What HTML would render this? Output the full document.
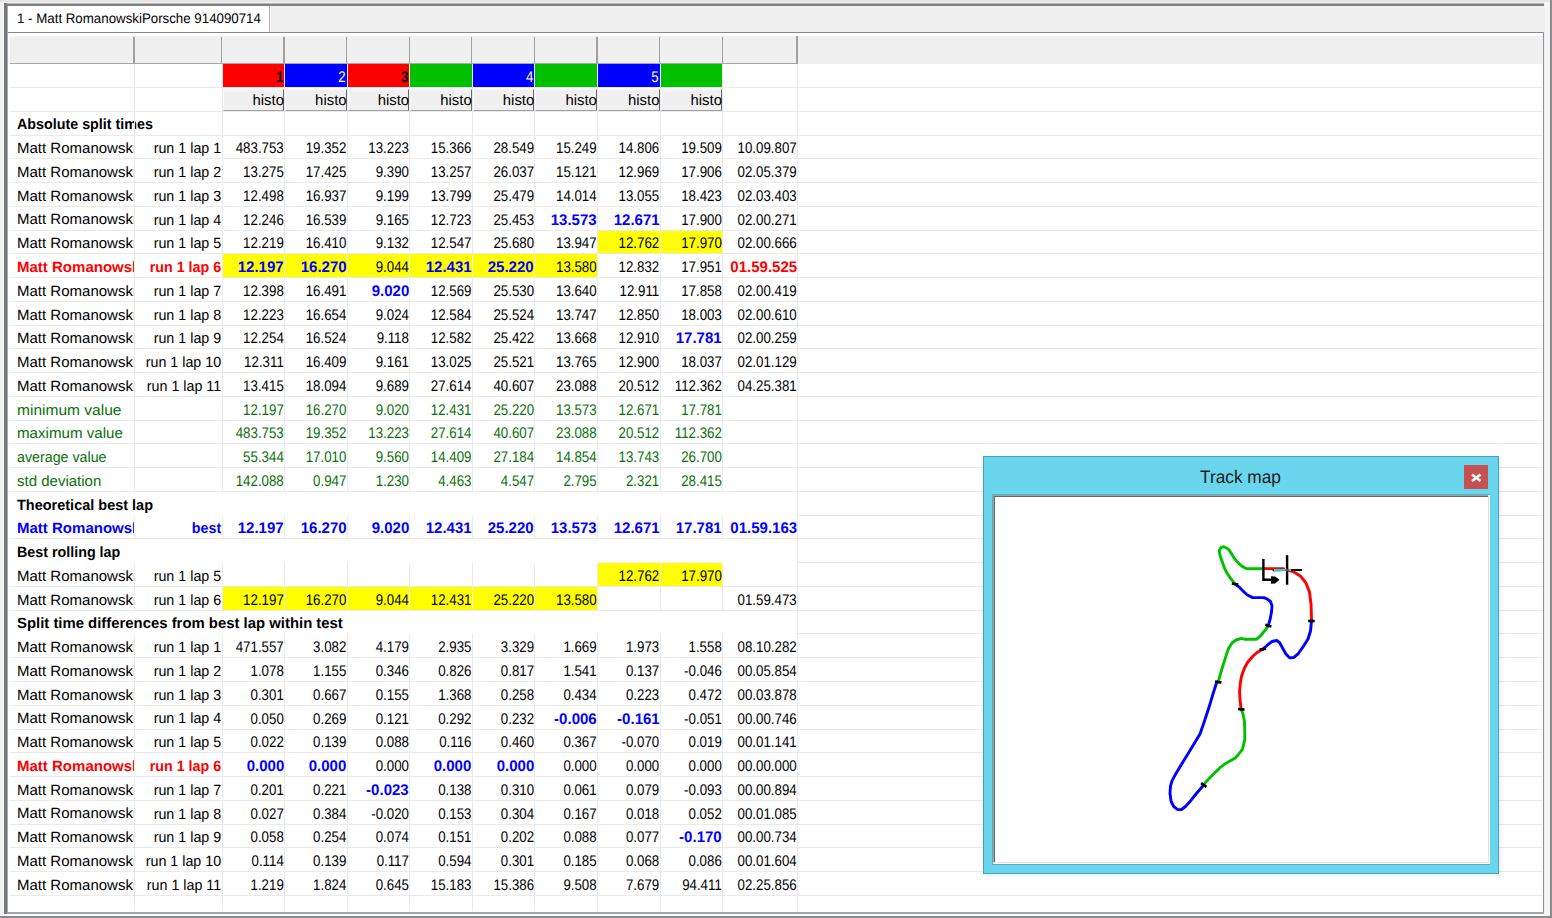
<!DOCTYPE html><html><head><meta charset="utf-8"><style>
*{margin:0;padding:0;box-sizing:border-box}
html,body{width:1552px;height:918px;overflow:hidden;background:#f0f0f0;font-family:"Liberation Sans",sans-serif;color:#000;text-rendering:geometricPrecision}
.a{position:absolute}
.t{position:absolute;white-space:pre;line-height:1}
.gl{position:absolute;background:#eaeaea}
</style></head><body>
<div class="a" style="left:0;top:0;width:1552px;height:2px;background:#e5e5e5"></div>
<div class="a" style="left:1px;top:2px;width:1548px;height:914px;border-left:3px solid #f5f5f5;border-top:1px solid #f4f4f4;border-right:4px solid #f7f7f7;border-bottom:2px solid #f7f7f7"></div>
<div class="a" style="left:1550px;top:0;width:2px;height:918px;background:#8c8c8c"></div>
<div class="a" style="left:0;top:916px;width:1552px;height:2px;background:#8a8a8a"></div>
<div class="a" style="left:4px;top:3px;width:1540px;height:1px;background:#b4b4b4"></div>
<div class="a" style="left:4px;top:4px;width:1540px;height:2px;background:#818181"></div>
<div class="a" style="left:4px;top:3px;width:3px;height:911px;background:#75787c"></div>
<div class="a" style="left:7px;top:6px;width:1px;height:908px;background:#a8abb0"></div>
<div class="a" style="left:8px;top:6px;width:1535px;height:906px;background:#fff"></div>
<div class="a" style="left:270px;top:5.8px;width:1274px;height:26px;background:#f0f0f0"></div>
<div class="a" style="left:269.2px;top:5.8px;width:1px;height:26px;background:#b8b8b8"></div>
<div class="a" style="left:7.7px;top:31.6px;width:1536.5px;height:1.2px;background:#848a94"></div>
<div class="a" style="left:1543px;top:32px;width:1px;height:882px;background:#8f949c"></div>
<div class="a" style="left:7px;top:912px;width:1537px;height:2px;background:#a0a4ab"></div>
<div class="t" style="left:17px;top:12.14px;font-size:13.3px;color:#000;transform:scale(1,1.05);transform-origin:left 11.26px;">1 - Matt RomanowskiPorsche 914090714</div>
<div class="a" style="left:10px;top:35.5px;width:1533.2px;height:28.14px;background:#f0f0f0"></div>
<div class="a" style="left:10px;top:62.9px;width:787.5px;height:1.2px;background:#a8a8a8"></div>
<div class="a" style="left:133.4px;top:37px;width:1.2px;height:26.6px;background:#a0a0a0"></div>
<div class="a" style="left:220.9px;top:37px;width:1.2px;height:26.6px;background:#a0a0a0"></div>
<div class="a" style="left:283.47px;top:37px;width:1.2px;height:26.6px;background:#a0a0a0"></div>
<div class="a" style="left:346.05px;top:37px;width:1.2px;height:26.6px;background:#a0a0a0"></div>
<div class="a" style="left:408.62px;top:37px;width:1.2px;height:26.6px;background:#a0a0a0"></div>
<div class="a" style="left:471.2px;top:37px;width:1.2px;height:26.6px;background:#a0a0a0"></div>
<div class="a" style="left:533.77px;top:37px;width:1.2px;height:26.6px;background:#a0a0a0"></div>
<div class="a" style="left:596.35px;top:37px;width:1.2px;height:26.6px;background:#a0a0a0"></div>
<div class="a" style="left:658.93px;top:37px;width:1.2px;height:26.6px;background:#a0a0a0"></div>
<div class="a" style="left:721.5px;top:37px;width:1.2px;height:26.6px;background:#a0a0a0"></div>
<div class="a" style="left:796.4px;top:35.5px;width:1.2px;height:28.1px;background:#a0a0a0"></div>
<div class="a" style="left:223px;top:64px;width:61px;height:23px;background:#ff0000"></div>
<div class="t" style="right:1268.92px;top:70.98px;font-size:13.3px;color:#000;font-weight:bold;transform:scale(0.95,1.16);transform-origin:right 11.26px;">1</div>
<div class="a" style="left:285px;top:64px;width:62px;height:23px;background:#0000ff"></div>
<div class="t" style="right:1206.35px;top:70.98px;font-size:13.3px;color:#fff;transform:scale(1,1.16);transform-origin:right 11.26px;">2</div>
<div class="a" style="left:348px;top:64px;width:61px;height:23px;background:#ff0000"></div>
<div class="t" style="right:1143.78px;top:70.98px;font-size:13.3px;color:#000;font-weight:bold;transform:scale(0.95,1.16);transform-origin:right 11.26px;">3</div>
<div class="a" style="left:410px;top:64px;width:62px;height:23px;background:#00c000"></div>
<div class="a" style="left:473px;top:64px;width:61px;height:23px;background:#0000ff"></div>
<div class="t" style="right:1018.62px;top:70.98px;font-size:13.3px;color:#fff;transform:scale(1,1.16);transform-origin:right 11.26px;">4</div>
<div class="a" style="left:535px;top:64px;width:62px;height:23px;background:#00c000"></div>
<div class="a" style="left:598px;top:64px;width:62px;height:23px;background:#0000ff"></div>
<div class="t" style="right:893.47px;top:70.98px;font-size:13.3px;color:#fff;transform:scale(1,1.16);transform-origin:right 11.26px;">5</div>
<div class="a" style="left:661px;top:64px;width:61px;height:23px;background:#00c000"></div>
<div class="a" style="left:223px;top:88.8px;width:61px;height:22.4px;background:#f0f0f0;border-top:1px solid #fafafa;border-left:1px solid #fafafa;border-right:1.3px solid #6a6a6a;border-bottom:1.2px solid #a0a0a0;overflow:hidden"></div>
<div class="t" style="right:1268.03px;top:94.29px;font-size:14.9px;color:#000;">histo</div>
<div class="a" style="left:285px;top:88.8px;width:62px;height:22.4px;background:#f0f0f0;border-top:1px solid #fafafa;border-left:1px solid #fafafa;border-right:1.3px solid #6a6a6a;border-bottom:1.2px solid #a0a0a0;overflow:hidden"></div>
<div class="t" style="right:1205.45px;top:94.29px;font-size:14.9px;color:#000;">histo</div>
<div class="a" style="left:348px;top:88.8px;width:61px;height:22.4px;background:#f0f0f0;border-top:1px solid #fafafa;border-left:1px solid #fafafa;border-right:1.3px solid #6a6a6a;border-bottom:1.2px solid #a0a0a0;overflow:hidden"></div>
<div class="t" style="right:1142.88px;top:94.29px;font-size:14.9px;color:#000;">histo</div>
<div class="a" style="left:410px;top:88.8px;width:62px;height:22.4px;background:#f0f0f0;border-top:1px solid #fafafa;border-left:1px solid #fafafa;border-right:1.3px solid #6a6a6a;border-bottom:1.2px solid #a0a0a0;overflow:hidden"></div>
<div class="t" style="right:1080.3px;top:94.29px;font-size:14.9px;color:#000;">histo</div>
<div class="a" style="left:473px;top:88.8px;width:61px;height:22.4px;background:#f0f0f0;border-top:1px solid #fafafa;border-left:1px solid #fafafa;border-right:1.3px solid #6a6a6a;border-bottom:1.2px solid #a0a0a0;overflow:hidden"></div>
<div class="t" style="right:1017.73px;top:94.29px;font-size:14.9px;color:#000;">histo</div>
<div class="a" style="left:535px;top:88.8px;width:62px;height:22.4px;background:#f0f0f0;border-top:1px solid #fafafa;border-left:1px solid #fafafa;border-right:1.3px solid #6a6a6a;border-bottom:1.2px solid #a0a0a0;overflow:hidden"></div>
<div class="t" style="right:955.15px;top:94.29px;font-size:14.9px;color:#000;">histo</div>
<div class="a" style="left:598px;top:88.8px;width:62px;height:22.4px;background:#f0f0f0;border-top:1px solid #fafafa;border-left:1px solid #fafafa;border-right:1.3px solid #6a6a6a;border-bottom:1.2px solid #a0a0a0;overflow:hidden"></div>
<div class="t" style="right:892.57px;top:94.29px;font-size:14.9px;color:#000;">histo</div>
<div class="a" style="left:661px;top:88.8px;width:61px;height:22.4px;background:#f0f0f0;border-top:1px solid #fafafa;border-left:1px solid #fafafa;border-right:1.3px solid #6a6a6a;border-bottom:1.2px solid #a0a0a0;overflow:hidden"></div>
<div class="t" style="right:830px;top:94.29px;font-size:14.9px;color:#000;">histo</div>
<div class="t" style="left:17px;top:118.46px;font-size:14.3px;color:#000;font-weight:bold;transform:scale(1,1.04);transform-origin:left 12.1px;">Absolute split times</div>
<div class="a" style="left:10px;top:134.92px;width:123.9px;height:23.76px;overflow:hidden">
<div class="t" style="left:7px;top:7.3px;font-size:14.3px;color:#000;transform:scale(1.05,1.04);transform-origin:left 12.1px;">Matt Romanowski</div>
</div>
<div class="t" style="right:1330.8px;top:142.22px;font-size:14.3px;color:#000;transform:scale(1,1.04);transform-origin:right 12.1px;">run 1 lap 1</div>
<div class="t" style="right:1268.22px;top:142.26px;font-size:13.3px;color:#000;transform:scale(1,1.16);transform-origin:right 11.26px;">483.753</div>
<div class="t" style="right:1205.65px;top:142.26px;font-size:13.3px;color:#000;transform:scale(1,1.16);transform-origin:right 11.26px;">19.352</div>
<div class="t" style="right:1143.08px;top:142.26px;font-size:13.3px;color:#000;transform:scale(1,1.16);transform-origin:right 11.26px;">13.223</div>
<div class="t" style="right:1080.5px;top:142.26px;font-size:13.3px;color:#000;transform:scale(1,1.16);transform-origin:right 11.26px;">15.366</div>
<div class="t" style="right:1017.92px;top:142.26px;font-size:13.3px;color:#000;transform:scale(1,1.16);transform-origin:right 11.26px;">28.549</div>
<div class="t" style="right:955.35px;top:142.26px;font-size:13.3px;color:#000;transform:scale(1,1.16);transform-origin:right 11.26px;">15.249</div>
<div class="t" style="right:892.77px;top:142.26px;font-size:13.3px;color:#000;transform:scale(1,1.16);transform-origin:right 11.26px;">14.806</div>
<div class="t" style="right:830.2px;top:142.26px;font-size:13.3px;color:#000;transform:scale(1,1.16);transform-origin:right 11.26px;">19.509</div>
<div class="t" style="right:755.3px;top:142.26px;font-size:13.3px;color:#000;transform:scale(1,1.16);transform-origin:right 11.26px;">10.09.807</div>
<div class="a" style="left:10px;top:158.68px;width:123.9px;height:23.76px;overflow:hidden">
<div class="t" style="left:7px;top:7.3px;font-size:14.3px;color:#000;transform:scale(1.05,1.04);transform-origin:left 12.1px;">Matt Romanowski</div>
</div>
<div class="t" style="right:1330.8px;top:165.98px;font-size:14.3px;color:#000;transform:scale(1,1.04);transform-origin:right 12.1px;">run 1 lap 2</div>
<div class="t" style="right:1268.22px;top:166.02px;font-size:13.3px;color:#000;transform:scale(1,1.16);transform-origin:right 11.26px;">13.275</div>
<div class="t" style="right:1205.65px;top:166.02px;font-size:13.3px;color:#000;transform:scale(1,1.16);transform-origin:right 11.26px;">17.425</div>
<div class="t" style="right:1143.08px;top:166.02px;font-size:13.3px;color:#000;transform:scale(1,1.16);transform-origin:right 11.26px;">9.390</div>
<div class="t" style="right:1080.5px;top:166.02px;font-size:13.3px;color:#000;transform:scale(1,1.16);transform-origin:right 11.26px;">13.257</div>
<div class="t" style="right:1017.92px;top:166.02px;font-size:13.3px;color:#000;transform:scale(1,1.16);transform-origin:right 11.26px;">26.037</div>
<div class="t" style="right:955.35px;top:166.02px;font-size:13.3px;color:#000;transform:scale(1,1.16);transform-origin:right 11.26px;">15.121</div>
<div class="t" style="right:892.77px;top:166.02px;font-size:13.3px;color:#000;transform:scale(1,1.16);transform-origin:right 11.26px;">12.969</div>
<div class="t" style="right:830.2px;top:166.02px;font-size:13.3px;color:#000;transform:scale(1,1.16);transform-origin:right 11.26px;">17.906</div>
<div class="t" style="right:755.3px;top:166.02px;font-size:13.3px;color:#000;transform:scale(1,1.16);transform-origin:right 11.26px;">02.05.379</div>
<div class="a" style="left:10px;top:182.44px;width:123.9px;height:23.76px;overflow:hidden">
<div class="t" style="left:7px;top:7.3px;font-size:14.3px;color:#000;transform:scale(1.05,1.04);transform-origin:left 12.1px;">Matt Romanowski</div>
</div>
<div class="t" style="right:1330.8px;top:189.74px;font-size:14.3px;color:#000;transform:scale(1,1.04);transform-origin:right 12.1px;">run 1 lap 3</div>
<div class="t" style="right:1268.22px;top:189.78px;font-size:13.3px;color:#000;transform:scale(1,1.16);transform-origin:right 11.26px;">12.498</div>
<div class="t" style="right:1205.65px;top:189.78px;font-size:13.3px;color:#000;transform:scale(1,1.16);transform-origin:right 11.26px;">16.937</div>
<div class="t" style="right:1143.08px;top:189.78px;font-size:13.3px;color:#000;transform:scale(1,1.16);transform-origin:right 11.26px;">9.199</div>
<div class="t" style="right:1080.5px;top:189.78px;font-size:13.3px;color:#000;transform:scale(1,1.16);transform-origin:right 11.26px;">13.799</div>
<div class="t" style="right:1017.92px;top:189.78px;font-size:13.3px;color:#000;transform:scale(1,1.16);transform-origin:right 11.26px;">25.479</div>
<div class="t" style="right:955.35px;top:189.78px;font-size:13.3px;color:#000;transform:scale(1,1.16);transform-origin:right 11.26px;">14.014</div>
<div class="t" style="right:892.77px;top:189.78px;font-size:13.3px;color:#000;transform:scale(1,1.16);transform-origin:right 11.26px;">13.055</div>
<div class="t" style="right:830.2px;top:189.78px;font-size:13.3px;color:#000;transform:scale(1,1.16);transform-origin:right 11.26px;">18.423</div>
<div class="t" style="right:755.3px;top:189.78px;font-size:13.3px;color:#000;transform:scale(1,1.16);transform-origin:right 11.26px;">02.03.403</div>
<div class="a" style="left:10px;top:206.2px;width:123.9px;height:23.76px;overflow:hidden">
<div class="t" style="left:7px;top:7.3px;font-size:14.3px;color:#000;transform:scale(1.05,1.04);transform-origin:left 12.1px;">Matt Romanowski</div>
</div>
<div class="t" style="right:1330.8px;top:213.5px;font-size:14.3px;color:#000;transform:scale(1,1.04);transform-origin:right 12.1px;">run 1 lap 4</div>
<div class="t" style="right:1268.22px;top:213.54px;font-size:13.3px;color:#000;transform:scale(1,1.16);transform-origin:right 11.26px;">12.246</div>
<div class="t" style="right:1205.65px;top:213.54px;font-size:13.3px;color:#000;transform:scale(1,1.16);transform-origin:right 11.26px;">16.539</div>
<div class="t" style="right:1143.08px;top:213.54px;font-size:13.3px;color:#000;transform:scale(1,1.16);transform-origin:right 11.26px;">9.165</div>
<div class="t" style="right:1080.5px;top:213.54px;font-size:13.3px;color:#000;transform:scale(1,1.16);transform-origin:right 11.26px;">12.723</div>
<div class="t" style="right:1017.92px;top:213.54px;font-size:13.3px;color:#000;transform:scale(1,1.16);transform-origin:right 11.26px;">25.453</div>
<div class="t" style="right:955.35px;top:213.54px;font-size:13.3px;color:#0000ff;font-weight:bold;transform:scale(1.13,1.16);transform-origin:right 11.26px;">13.573</div>
<div class="t" style="right:892.77px;top:213.54px;font-size:13.3px;color:#0000ff;font-weight:bold;transform:scale(1.13,1.16);transform-origin:right 11.26px;">12.671</div>
<div class="t" style="right:830.2px;top:213.54px;font-size:13.3px;color:#000;transform:scale(1,1.16);transform-origin:right 11.26px;">17.900</div>
<div class="t" style="right:755.3px;top:213.54px;font-size:13.3px;color:#000;transform:scale(1,1.16);transform-origin:right 11.26px;">02.00.271</div>
<div class="a" style="left:10px;top:229.96px;width:123.9px;height:23.76px;overflow:hidden">
<div class="t" style="left:7px;top:7.3px;font-size:14.3px;color:#000;transform:scale(1.05,1.04);transform-origin:left 12.1px;">Matt Romanowski</div>
</div>
<div class="t" style="right:1330.8px;top:237.26px;font-size:14.3px;color:#000;transform:scale(1,1.04);transform-origin:right 12.1px;">run 1 lap 5</div>
<div class="t" style="right:1268.22px;top:237.3px;font-size:13.3px;color:#000;transform:scale(1,1.16);transform-origin:right 11.26px;">12.219</div>
<div class="t" style="right:1205.65px;top:237.3px;font-size:13.3px;color:#000;transform:scale(1,1.16);transform-origin:right 11.26px;">16.410</div>
<div class="t" style="right:1143.08px;top:237.3px;font-size:13.3px;color:#000;transform:scale(1,1.16);transform-origin:right 11.26px;">9.132</div>
<div class="t" style="right:1080.5px;top:237.3px;font-size:13.3px;color:#000;transform:scale(1,1.16);transform-origin:right 11.26px;">12.547</div>
<div class="t" style="right:1017.92px;top:237.3px;font-size:13.3px;color:#000;transform:scale(1,1.16);transform-origin:right 11.26px;">25.680</div>
<div class="t" style="right:955.35px;top:237.3px;font-size:13.3px;color:#000;transform:scale(1,1.16);transform-origin:right 11.26px;">13.947</div>
<div class="a" style="left:598px;top:231px;width:62px;height:22px;background:#ffff00"></div>
<div class="t" style="right:892.77px;top:237.3px;font-size:13.3px;color:#000;transform:scale(1,1.16);transform-origin:right 11.26px;">12.762</div>
<div class="a" style="left:661px;top:231px;width:61px;height:22px;background:#ffff00"></div>
<div class="t" style="right:830.2px;top:237.3px;font-size:13.3px;color:#000;transform:scale(1,1.16);transform-origin:right 11.26px;">17.970</div>
<div class="t" style="right:755.3px;top:237.3px;font-size:13.3px;color:#000;transform:scale(1,1.16);transform-origin:right 11.26px;">02.00.666</div>
<div class="a" style="left:10px;top:253.72px;width:123.9px;height:23.76px;overflow:hidden">
<div class="t" style="left:7px;top:7.3px;font-size:14.3px;color:#ff0000;font-weight:bold;transform:scale(1.05,1.04);transform-origin:left 12.1px;">Matt Romanowski</div>
</div>
<div class="t" style="right:1330.8px;top:261.02px;font-size:14.3px;color:#ff0000;font-weight:bold;transform:scale(1,1.04);transform-origin:right 12.1px;">run 1 lap 6</div>
<div class="a" style="left:223px;top:254px;width:61px;height:23px;background:#ffff00"></div>
<div class="t" style="right:1268.22px;top:261.06px;font-size:13.3px;color:#0000ff;font-weight:bold;transform:scale(1.13,1.16);transform-origin:right 11.26px;">12.197</div>
<div class="a" style="left:285px;top:254px;width:62px;height:23px;background:#ffff00"></div>
<div class="t" style="right:1205.65px;top:261.06px;font-size:13.3px;color:#0000ff;font-weight:bold;transform:scale(1.13,1.16);transform-origin:right 11.26px;">16.270</div>
<div class="a" style="left:348px;top:254px;width:61px;height:23px;background:#ffff00"></div>
<div class="t" style="right:1143.08px;top:261.06px;font-size:13.3px;color:#000;transform:scale(1,1.16);transform-origin:right 11.26px;">9.044</div>
<div class="a" style="left:410px;top:254px;width:62px;height:23px;background:#ffff00"></div>
<div class="t" style="right:1080.5px;top:261.06px;font-size:13.3px;color:#0000ff;font-weight:bold;transform:scale(1.13,1.16);transform-origin:right 11.26px;">12.431</div>
<div class="a" style="left:473px;top:254px;width:61px;height:23px;background:#ffff00"></div>
<div class="t" style="right:1017.92px;top:261.06px;font-size:13.3px;color:#0000ff;font-weight:bold;transform:scale(1.13,1.16);transform-origin:right 11.26px;">25.220</div>
<div class="a" style="left:535px;top:254px;width:62px;height:23px;background:#ffff00"></div>
<div class="t" style="right:955.35px;top:261.06px;font-size:13.3px;color:#000;transform:scale(1,1.16);transform-origin:right 11.26px;">13.580</div>
<div class="t" style="right:892.77px;top:261.06px;font-size:13.3px;color:#000;transform:scale(1,1.16);transform-origin:right 11.26px;">12.832</div>
<div class="t" style="right:830.2px;top:261.06px;font-size:13.3px;color:#000;transform:scale(1,1.16);transform-origin:right 11.26px;">17.951</div>
<div class="t" style="right:755.3px;top:261.06px;font-size:13.3px;color:#ff0000;font-weight:bold;transform:scale(1.13,1.16);transform-origin:right 11.26px;">01.59.525</div>
<div class="a" style="left:10px;top:277.48px;width:123.9px;height:23.76px;overflow:hidden">
<div class="t" style="left:7px;top:7.3px;font-size:14.3px;color:#000;transform:scale(1.05,1.04);transform-origin:left 12.1px;">Matt Romanowski</div>
</div>
<div class="t" style="right:1330.8px;top:284.78px;font-size:14.3px;color:#000;transform:scale(1,1.04);transform-origin:right 12.1px;">run 1 lap 7</div>
<div class="t" style="right:1268.22px;top:284.82px;font-size:13.3px;color:#000;transform:scale(1,1.16);transform-origin:right 11.26px;">12.398</div>
<div class="t" style="right:1205.65px;top:284.82px;font-size:13.3px;color:#000;transform:scale(1,1.16);transform-origin:right 11.26px;">16.491</div>
<div class="t" style="right:1143.08px;top:284.82px;font-size:13.3px;color:#0000ff;font-weight:bold;transform:scale(1.13,1.16);transform-origin:right 11.26px;">9.020</div>
<div class="t" style="right:1080.5px;top:284.82px;font-size:13.3px;color:#000;transform:scale(1,1.16);transform-origin:right 11.26px;">12.569</div>
<div class="t" style="right:1017.92px;top:284.82px;font-size:13.3px;color:#000;transform:scale(1,1.16);transform-origin:right 11.26px;">25.530</div>
<div class="t" style="right:955.35px;top:284.82px;font-size:13.3px;color:#000;transform:scale(1,1.16);transform-origin:right 11.26px;">13.640</div>
<div class="t" style="right:892.77px;top:284.82px;font-size:13.3px;color:#000;transform:scale(1,1.16);transform-origin:right 11.26px;">12.911</div>
<div class="t" style="right:830.2px;top:284.82px;font-size:13.3px;color:#000;transform:scale(1,1.16);transform-origin:right 11.26px;">17.858</div>
<div class="t" style="right:755.3px;top:284.82px;font-size:13.3px;color:#000;transform:scale(1,1.16);transform-origin:right 11.26px;">02.00.419</div>
<div class="a" style="left:10px;top:301.24px;width:123.9px;height:23.76px;overflow:hidden">
<div class="t" style="left:7px;top:7.3px;font-size:14.3px;color:#000;transform:scale(1.05,1.04);transform-origin:left 12.1px;">Matt Romanowski</div>
</div>
<div class="t" style="right:1330.8px;top:308.54px;font-size:14.3px;color:#000;transform:scale(1,1.04);transform-origin:right 12.1px;">run 1 lap 8</div>
<div class="t" style="right:1268.22px;top:308.58px;font-size:13.3px;color:#000;transform:scale(1,1.16);transform-origin:right 11.26px;">12.223</div>
<div class="t" style="right:1205.65px;top:308.58px;font-size:13.3px;color:#000;transform:scale(1,1.16);transform-origin:right 11.26px;">16.654</div>
<div class="t" style="right:1143.08px;top:308.58px;font-size:13.3px;color:#000;transform:scale(1,1.16);transform-origin:right 11.26px;">9.024</div>
<div class="t" style="right:1080.5px;top:308.58px;font-size:13.3px;color:#000;transform:scale(1,1.16);transform-origin:right 11.26px;">12.584</div>
<div class="t" style="right:1017.92px;top:308.58px;font-size:13.3px;color:#000;transform:scale(1,1.16);transform-origin:right 11.26px;">25.524</div>
<div class="t" style="right:955.35px;top:308.58px;font-size:13.3px;color:#000;transform:scale(1,1.16);transform-origin:right 11.26px;">13.747</div>
<div class="t" style="right:892.77px;top:308.58px;font-size:13.3px;color:#000;transform:scale(1,1.16);transform-origin:right 11.26px;">12.850</div>
<div class="t" style="right:830.2px;top:308.58px;font-size:13.3px;color:#000;transform:scale(1,1.16);transform-origin:right 11.26px;">18.003</div>
<div class="t" style="right:755.3px;top:308.58px;font-size:13.3px;color:#000;transform:scale(1,1.16);transform-origin:right 11.26px;">02.00.610</div>
<div class="a" style="left:10px;top:325px;width:123.9px;height:23.76px;overflow:hidden">
<div class="t" style="left:7px;top:7.3px;font-size:14.3px;color:#000;transform:scale(1.05,1.04);transform-origin:left 12.1px;">Matt Romanowski</div>
</div>
<div class="t" style="right:1330.8px;top:332.3px;font-size:14.3px;color:#000;transform:scale(1,1.04);transform-origin:right 12.1px;">run 1 lap 9</div>
<div class="t" style="right:1268.22px;top:332.34px;font-size:13.3px;color:#000;transform:scale(1,1.16);transform-origin:right 11.26px;">12.254</div>
<div class="t" style="right:1205.65px;top:332.34px;font-size:13.3px;color:#000;transform:scale(1,1.16);transform-origin:right 11.26px;">16.524</div>
<div class="t" style="right:1143.08px;top:332.34px;font-size:13.3px;color:#000;transform:scale(1,1.16);transform-origin:right 11.26px;">9.118</div>
<div class="t" style="right:1080.5px;top:332.34px;font-size:13.3px;color:#000;transform:scale(1,1.16);transform-origin:right 11.26px;">12.582</div>
<div class="t" style="right:1017.92px;top:332.34px;font-size:13.3px;color:#000;transform:scale(1,1.16);transform-origin:right 11.26px;">25.422</div>
<div class="t" style="right:955.35px;top:332.34px;font-size:13.3px;color:#000;transform:scale(1,1.16);transform-origin:right 11.26px;">13.668</div>
<div class="t" style="right:892.77px;top:332.34px;font-size:13.3px;color:#000;transform:scale(1,1.16);transform-origin:right 11.26px;">12.910</div>
<div class="t" style="right:830.2px;top:332.34px;font-size:13.3px;color:#0000ff;font-weight:bold;transform:scale(1.13,1.16);transform-origin:right 11.26px;">17.781</div>
<div class="t" style="right:755.3px;top:332.34px;font-size:13.3px;color:#000;transform:scale(1,1.16);transform-origin:right 11.26px;">02.00.259</div>
<div class="a" style="left:10px;top:348.76px;width:123.9px;height:23.76px;overflow:hidden">
<div class="t" style="left:7px;top:7.3px;font-size:14.3px;color:#000;transform:scale(1.05,1.04);transform-origin:left 12.1px;">Matt Romanowski</div>
</div>
<div class="t" style="right:1330.8px;top:356.06px;font-size:14.3px;color:#000;transform:scale(1,1.04);transform-origin:right 12.1px;">run 1 lap 10</div>
<div class="t" style="right:1268.22px;top:356.1px;font-size:13.3px;color:#000;transform:scale(1,1.16);transform-origin:right 11.26px;">12.311</div>
<div class="t" style="right:1205.65px;top:356.1px;font-size:13.3px;color:#000;transform:scale(1,1.16);transform-origin:right 11.26px;">16.409</div>
<div class="t" style="right:1143.08px;top:356.1px;font-size:13.3px;color:#000;transform:scale(1,1.16);transform-origin:right 11.26px;">9.161</div>
<div class="t" style="right:1080.5px;top:356.1px;font-size:13.3px;color:#000;transform:scale(1,1.16);transform-origin:right 11.26px;">13.025</div>
<div class="t" style="right:1017.92px;top:356.1px;font-size:13.3px;color:#000;transform:scale(1,1.16);transform-origin:right 11.26px;">25.521</div>
<div class="t" style="right:955.35px;top:356.1px;font-size:13.3px;color:#000;transform:scale(1,1.16);transform-origin:right 11.26px;">13.765</div>
<div class="t" style="right:892.77px;top:356.1px;font-size:13.3px;color:#000;transform:scale(1,1.16);transform-origin:right 11.26px;">12.900</div>
<div class="t" style="right:830.2px;top:356.1px;font-size:13.3px;color:#000;transform:scale(1,1.16);transform-origin:right 11.26px;">18.037</div>
<div class="t" style="right:755.3px;top:356.1px;font-size:13.3px;color:#000;transform:scale(1,1.16);transform-origin:right 11.26px;">02.01.129</div>
<div class="a" style="left:10px;top:372.52px;width:123.9px;height:23.76px;overflow:hidden">
<div class="t" style="left:7px;top:7.3px;font-size:14.3px;color:#000;transform:scale(1.05,1.04);transform-origin:left 12.1px;">Matt Romanowski</div>
</div>
<div class="t" style="right:1330.8px;top:379.82px;font-size:14.3px;color:#000;transform:scale(1,1.04);transform-origin:right 12.1px;">run 1 lap 11</div>
<div class="t" style="right:1268.22px;top:379.86px;font-size:13.3px;color:#000;transform:scale(1,1.16);transform-origin:right 11.26px;">13.415</div>
<div class="t" style="right:1205.65px;top:379.86px;font-size:13.3px;color:#000;transform:scale(1,1.16);transform-origin:right 11.26px;">18.094</div>
<div class="t" style="right:1143.08px;top:379.86px;font-size:13.3px;color:#000;transform:scale(1,1.16);transform-origin:right 11.26px;">9.689</div>
<div class="t" style="right:1080.5px;top:379.86px;font-size:13.3px;color:#000;transform:scale(1,1.16);transform-origin:right 11.26px;">27.614</div>
<div class="t" style="right:1017.92px;top:379.86px;font-size:13.3px;color:#000;transform:scale(1,1.16);transform-origin:right 11.26px;">40.607</div>
<div class="t" style="right:955.35px;top:379.86px;font-size:13.3px;color:#000;transform:scale(1,1.16);transform-origin:right 11.26px;">23.088</div>
<div class="t" style="right:892.77px;top:379.86px;font-size:13.3px;color:#000;transform:scale(1,1.16);transform-origin:right 11.26px;">20.512</div>
<div class="t" style="right:830.2px;top:379.86px;font-size:13.3px;color:#000;transform:scale(1,1.16);transform-origin:right 11.26px;">112.362</div>
<div class="t" style="right:755.3px;top:379.86px;font-size:13.3px;color:#000;transform:scale(1,1.16);transform-origin:right 11.26px;">04.25.381</div>
<div class="t" style="left:17px;top:403.58px;font-size:14.3px;color:#0a700a;transform:scale(1.087,1.04);transform-origin:left 12.1px;">minimum value</div>
<div class="t" style="right:1268.22px;top:403.62px;font-size:13.3px;color:#0a700a;transform:scale(1,1.16);transform-origin:right 11.26px;">12.197</div>
<div class="t" style="right:1205.65px;top:403.62px;font-size:13.3px;color:#0a700a;transform:scale(1,1.16);transform-origin:right 11.26px;">16.270</div>
<div class="t" style="right:1143.08px;top:403.62px;font-size:13.3px;color:#0a700a;transform:scale(1,1.16);transform-origin:right 11.26px;">9.020</div>
<div class="t" style="right:1080.5px;top:403.62px;font-size:13.3px;color:#0a700a;transform:scale(1,1.16);transform-origin:right 11.26px;">12.431</div>
<div class="t" style="right:1017.92px;top:403.62px;font-size:13.3px;color:#0a700a;transform:scale(1,1.16);transform-origin:right 11.26px;">25.220</div>
<div class="t" style="right:955.35px;top:403.62px;font-size:13.3px;color:#0a700a;transform:scale(1,1.16);transform-origin:right 11.26px;">13.573</div>
<div class="t" style="right:892.77px;top:403.62px;font-size:13.3px;color:#0a700a;transform:scale(1,1.16);transform-origin:right 11.26px;">12.671</div>
<div class="t" style="right:830.2px;top:403.62px;font-size:13.3px;color:#0a700a;transform:scale(1,1.16);transform-origin:right 11.26px;">17.781</div>
<div class="t" style="left:17px;top:427.34px;font-size:14.3px;color:#0a700a;transform:scale(1.058,1.04);transform-origin:left 12.1px;">maximum value</div>
<div class="t" style="right:1268.22px;top:427.38px;font-size:13.3px;color:#0a700a;transform:scale(1,1.16);transform-origin:right 11.26px;">483.753</div>
<div class="t" style="right:1205.65px;top:427.38px;font-size:13.3px;color:#0a700a;transform:scale(1,1.16);transform-origin:right 11.26px;">19.352</div>
<div class="t" style="right:1143.08px;top:427.38px;font-size:13.3px;color:#0a700a;transform:scale(1,1.16);transform-origin:right 11.26px;">13.223</div>
<div class="t" style="right:1080.5px;top:427.38px;font-size:13.3px;color:#0a700a;transform:scale(1,1.16);transform-origin:right 11.26px;">27.614</div>
<div class="t" style="right:1017.92px;top:427.38px;font-size:13.3px;color:#0a700a;transform:scale(1,1.16);transform-origin:right 11.26px;">40.607</div>
<div class="t" style="right:955.35px;top:427.38px;font-size:13.3px;color:#0a700a;transform:scale(1,1.16);transform-origin:right 11.26px;">23.088</div>
<div class="t" style="right:892.77px;top:427.38px;font-size:13.3px;color:#0a700a;transform:scale(1,1.16);transform-origin:right 11.26px;">20.512</div>
<div class="t" style="right:830.2px;top:427.38px;font-size:13.3px;color:#0a700a;transform:scale(1,1.16);transform-origin:right 11.26px;">112.362</div>
<div class="t" style="left:17px;top:451.1px;font-size:14.3px;color:#0a700a;transform:scale(0.997,1.04);transform-origin:left 12.1px;">average value</div>
<div class="t" style="right:1268.22px;top:451.14px;font-size:13.3px;color:#0a700a;transform:scale(1,1.16);transform-origin:right 11.26px;">55.344</div>
<div class="t" style="right:1205.65px;top:451.14px;font-size:13.3px;color:#0a700a;transform:scale(1,1.16);transform-origin:right 11.26px;">17.010</div>
<div class="t" style="right:1143.08px;top:451.14px;font-size:13.3px;color:#0a700a;transform:scale(1,1.16);transform-origin:right 11.26px;">9.560</div>
<div class="t" style="right:1080.5px;top:451.14px;font-size:13.3px;color:#0a700a;transform:scale(1,1.16);transform-origin:right 11.26px;">14.409</div>
<div class="t" style="right:1017.92px;top:451.14px;font-size:13.3px;color:#0a700a;transform:scale(1,1.16);transform-origin:right 11.26px;">27.184</div>
<div class="t" style="right:955.35px;top:451.14px;font-size:13.3px;color:#0a700a;transform:scale(1,1.16);transform-origin:right 11.26px;">14.854</div>
<div class="t" style="right:892.77px;top:451.14px;font-size:13.3px;color:#0a700a;transform:scale(1,1.16);transform-origin:right 11.26px;">13.743</div>
<div class="t" style="right:830.2px;top:451.14px;font-size:13.3px;color:#0a700a;transform:scale(1,1.16);transform-origin:right 11.26px;">26.700</div>
<div class="t" style="left:17px;top:474.86px;font-size:14.3px;color:#0a700a;transform:scale(1.05,1.04);transform-origin:left 12.1px;">std deviation</div>
<div class="t" style="right:1268.22px;top:474.9px;font-size:13.3px;color:#0a700a;transform:scale(1,1.16);transform-origin:right 11.26px;">142.088</div>
<div class="t" style="right:1205.65px;top:474.9px;font-size:13.3px;color:#0a700a;transform:scale(1,1.16);transform-origin:right 11.26px;">0.947</div>
<div class="t" style="right:1143.08px;top:474.9px;font-size:13.3px;color:#0a700a;transform:scale(1,1.16);transform-origin:right 11.26px;">1.230</div>
<div class="t" style="right:1080.5px;top:474.9px;font-size:13.3px;color:#0a700a;transform:scale(1,1.16);transform-origin:right 11.26px;">4.463</div>
<div class="t" style="right:1017.92px;top:474.9px;font-size:13.3px;color:#0a700a;transform:scale(1,1.16);transform-origin:right 11.26px;">4.547</div>
<div class="t" style="right:955.35px;top:474.9px;font-size:13.3px;color:#0a700a;transform:scale(1,1.16);transform-origin:right 11.26px;">2.795</div>
<div class="t" style="right:892.77px;top:474.9px;font-size:13.3px;color:#0a700a;transform:scale(1,1.16);transform-origin:right 11.26px;">2.321</div>
<div class="t" style="right:830.2px;top:474.9px;font-size:13.3px;color:#0a700a;transform:scale(1,1.16);transform-origin:right 11.26px;">28.415</div>
<div class="t" style="left:17px;top:498.62px;font-size:14.3px;color:#000;font-weight:bold;transform:scale(1.013,1.04);transform-origin:left 12.1px;">Theoretical best lap</div>
<div class="a" style="left:10px;top:515.08px;width:123.9px;height:23.76px;overflow:hidden">
<div class="t" style="left:7px;top:7.3px;font-size:14.3px;color:#0000ff;font-weight:bold;transform:scale(1.05,1.04);transform-origin:left 12.1px;">Matt Romanowski</div>
</div>
<div class="t" style="right:1330.8px;top:522.38px;font-size:14.3px;color:#0000ff;font-weight:bold;transform:scale(1,1.04);transform-origin:right 12.1px;">best</div>
<div class="t" style="right:1268.22px;top:522.42px;font-size:13.3px;color:#0000ff;font-weight:bold;transform:scale(1.13,1.16);transform-origin:right 11.26px;">12.197</div>
<div class="t" style="right:1205.65px;top:522.42px;font-size:13.3px;color:#0000ff;font-weight:bold;transform:scale(1.13,1.16);transform-origin:right 11.26px;">16.270</div>
<div class="t" style="right:1143.08px;top:522.42px;font-size:13.3px;color:#0000ff;font-weight:bold;transform:scale(1.13,1.16);transform-origin:right 11.26px;">9.020</div>
<div class="t" style="right:1080.5px;top:522.42px;font-size:13.3px;color:#0000ff;font-weight:bold;transform:scale(1.13,1.16);transform-origin:right 11.26px;">12.431</div>
<div class="t" style="right:1017.92px;top:522.42px;font-size:13.3px;color:#0000ff;font-weight:bold;transform:scale(1.13,1.16);transform-origin:right 11.26px;">25.220</div>
<div class="t" style="right:955.35px;top:522.42px;font-size:13.3px;color:#0000ff;font-weight:bold;transform:scale(1.13,1.16);transform-origin:right 11.26px;">13.573</div>
<div class="t" style="right:892.77px;top:522.42px;font-size:13.3px;color:#0000ff;font-weight:bold;transform:scale(1.13,1.16);transform-origin:right 11.26px;">12.671</div>
<div class="t" style="right:830.2px;top:522.42px;font-size:13.3px;color:#0000ff;font-weight:bold;transform:scale(1.13,1.16);transform-origin:right 11.26px;">17.781</div>
<div class="t" style="right:755.3px;top:522.42px;font-size:13.3px;color:#0000ff;font-weight:bold;transform:scale(1.13,1.16);transform-origin:right 11.26px;">01.59.163</div>
<div class="t" style="left:17px;top:546.14px;font-size:14.3px;color:#000;font-weight:bold;transform:scale(1,1.04);transform-origin:left 12.1px;">Best rolling lap</div>
<div class="a" style="left:10px;top:562.6px;width:123.9px;height:23.76px;overflow:hidden">
<div class="t" style="left:7px;top:7.3px;font-size:14.3px;color:#000;transform:scale(1.05,1.04);transform-origin:left 12.1px;">Matt Romanowski</div>
</div>
<div class="t" style="right:1330.8px;top:569.9px;font-size:14.3px;color:#000;transform:scale(1,1.04);transform-origin:right 12.1px;">run 1 lap 5</div>
<div class="a" style="left:598px;top:563px;width:62px;height:23px;background:#ffff00"></div>
<div class="t" style="right:892.77px;top:569.94px;font-size:13.3px;color:#000;transform:scale(1,1.16);transform-origin:right 11.26px;">12.762</div>
<div class="a" style="left:661px;top:563px;width:61px;height:23px;background:#ffff00"></div>
<div class="t" style="right:830.2px;top:569.94px;font-size:13.3px;color:#000;transform:scale(1,1.16);transform-origin:right 11.26px;">17.970</div>
<div class="a" style="left:10px;top:586.36px;width:123.9px;height:23.76px;overflow:hidden">
<div class="t" style="left:7px;top:7.3px;font-size:14.3px;color:#000;transform:scale(1.05,1.04);transform-origin:left 12.1px;">Matt Romanowski</div>
</div>
<div class="t" style="right:1330.8px;top:593.66px;font-size:14.3px;color:#000;transform:scale(1,1.04);transform-origin:right 12.1px;">run 1 lap 6</div>
<div class="a" style="left:223px;top:587px;width:61px;height:23px;background:#ffff00"></div>
<div class="t" style="right:1268.22px;top:593.7px;font-size:13.3px;color:#000;transform:scale(1,1.16);transform-origin:right 11.26px;">12.197</div>
<div class="a" style="left:285px;top:587px;width:62px;height:23px;background:#ffff00"></div>
<div class="t" style="right:1205.65px;top:593.7px;font-size:13.3px;color:#000;transform:scale(1,1.16);transform-origin:right 11.26px;">16.270</div>
<div class="a" style="left:348px;top:587px;width:61px;height:23px;background:#ffff00"></div>
<div class="t" style="right:1143.08px;top:593.7px;font-size:13.3px;color:#000;transform:scale(1,1.16);transform-origin:right 11.26px;">9.044</div>
<div class="a" style="left:410px;top:587px;width:62px;height:23px;background:#ffff00"></div>
<div class="t" style="right:1080.5px;top:593.7px;font-size:13.3px;color:#000;transform:scale(1,1.16);transform-origin:right 11.26px;">12.431</div>
<div class="a" style="left:473px;top:587px;width:61px;height:23px;background:#ffff00"></div>
<div class="t" style="right:1017.92px;top:593.7px;font-size:13.3px;color:#000;transform:scale(1,1.16);transform-origin:right 11.26px;">25.220</div>
<div class="a" style="left:535px;top:587px;width:62px;height:23px;background:#ffff00"></div>
<div class="t" style="right:955.35px;top:593.7px;font-size:13.3px;color:#000;transform:scale(1,1.16);transform-origin:right 11.26px;">13.580</div>
<div class="t" style="right:755.3px;top:593.7px;font-size:13.3px;color:#000;transform:scale(1,1.16);transform-origin:right 11.26px;">01.59.473</div>
<div class="t" style="left:17px;top:617.42px;font-size:14.3px;color:#000;font-weight:bold;transform:scale(1.041,1.04);transform-origin:left 12.1px;">Split time differences from best lap within test</div>
<div class="a" style="left:10px;top:633.88px;width:123.9px;height:23.76px;overflow:hidden">
<div class="t" style="left:7px;top:7.3px;font-size:14.3px;color:#000;transform:scale(1.05,1.04);transform-origin:left 12.1px;">Matt Romanowski</div>
</div>
<div class="t" style="right:1330.8px;top:641.18px;font-size:14.3px;color:#000;transform:scale(1,1.04);transform-origin:right 12.1px;">run 1 lap 1</div>
<div class="t" style="right:1268.22px;top:641.22px;font-size:13.3px;color:#000;transform:scale(1,1.16);transform-origin:right 11.26px;">471.557</div>
<div class="t" style="right:1205.65px;top:641.22px;font-size:13.3px;color:#000;transform:scale(1,1.16);transform-origin:right 11.26px;">3.082</div>
<div class="t" style="right:1143.08px;top:641.22px;font-size:13.3px;color:#000;transform:scale(1,1.16);transform-origin:right 11.26px;">4.179</div>
<div class="t" style="right:1080.5px;top:641.22px;font-size:13.3px;color:#000;transform:scale(1,1.16);transform-origin:right 11.26px;">2.935</div>
<div class="t" style="right:1017.92px;top:641.22px;font-size:13.3px;color:#000;transform:scale(1,1.16);transform-origin:right 11.26px;">3.329</div>
<div class="t" style="right:955.35px;top:641.22px;font-size:13.3px;color:#000;transform:scale(1,1.16);transform-origin:right 11.26px;">1.669</div>
<div class="t" style="right:892.77px;top:641.22px;font-size:13.3px;color:#000;transform:scale(1,1.16);transform-origin:right 11.26px;">1.973</div>
<div class="t" style="right:830.2px;top:641.22px;font-size:13.3px;color:#000;transform:scale(1,1.16);transform-origin:right 11.26px;">1.558</div>
<div class="t" style="right:755.3px;top:641.22px;font-size:13.3px;color:#000;transform:scale(1,1.16);transform-origin:right 11.26px;">08.10.282</div>
<div class="a" style="left:10px;top:657.64px;width:123.9px;height:23.76px;overflow:hidden">
<div class="t" style="left:7px;top:7.3px;font-size:14.3px;color:#000;transform:scale(1.05,1.04);transform-origin:left 12.1px;">Matt Romanowski</div>
</div>
<div class="t" style="right:1330.8px;top:664.94px;font-size:14.3px;color:#000;transform:scale(1,1.04);transform-origin:right 12.1px;">run 1 lap 2</div>
<div class="t" style="right:1268.22px;top:664.98px;font-size:13.3px;color:#000;transform:scale(1,1.16);transform-origin:right 11.26px;">1.078</div>
<div class="t" style="right:1205.65px;top:664.98px;font-size:13.3px;color:#000;transform:scale(1,1.16);transform-origin:right 11.26px;">1.155</div>
<div class="t" style="right:1143.08px;top:664.98px;font-size:13.3px;color:#000;transform:scale(1,1.16);transform-origin:right 11.26px;">0.346</div>
<div class="t" style="right:1080.5px;top:664.98px;font-size:13.3px;color:#000;transform:scale(1,1.16);transform-origin:right 11.26px;">0.826</div>
<div class="t" style="right:1017.92px;top:664.98px;font-size:13.3px;color:#000;transform:scale(1,1.16);transform-origin:right 11.26px;">0.817</div>
<div class="t" style="right:955.35px;top:664.98px;font-size:13.3px;color:#000;transform:scale(1,1.16);transform-origin:right 11.26px;">1.541</div>
<div class="t" style="right:892.77px;top:664.98px;font-size:13.3px;color:#000;transform:scale(1,1.16);transform-origin:right 11.26px;">0.137</div>
<div class="t" style="right:830.2px;top:664.98px;font-size:13.3px;color:#000;transform:scale(1,1.16);transform-origin:right 11.26px;">-0.046</div>
<div class="t" style="right:755.3px;top:664.98px;font-size:13.3px;color:#000;transform:scale(1,1.16);transform-origin:right 11.26px;">00.05.854</div>
<div class="a" style="left:10px;top:681.4px;width:123.9px;height:23.76px;overflow:hidden">
<div class="t" style="left:7px;top:7.3px;font-size:14.3px;color:#000;transform:scale(1.05,1.04);transform-origin:left 12.1px;">Matt Romanowski</div>
</div>
<div class="t" style="right:1330.8px;top:688.7px;font-size:14.3px;color:#000;transform:scale(1,1.04);transform-origin:right 12.1px;">run 1 lap 3</div>
<div class="t" style="right:1268.22px;top:688.74px;font-size:13.3px;color:#000;transform:scale(1,1.16);transform-origin:right 11.26px;">0.301</div>
<div class="t" style="right:1205.65px;top:688.74px;font-size:13.3px;color:#000;transform:scale(1,1.16);transform-origin:right 11.26px;">0.667</div>
<div class="t" style="right:1143.08px;top:688.74px;font-size:13.3px;color:#000;transform:scale(1,1.16);transform-origin:right 11.26px;">0.155</div>
<div class="t" style="right:1080.5px;top:688.74px;font-size:13.3px;color:#000;transform:scale(1,1.16);transform-origin:right 11.26px;">1.368</div>
<div class="t" style="right:1017.92px;top:688.74px;font-size:13.3px;color:#000;transform:scale(1,1.16);transform-origin:right 11.26px;">0.258</div>
<div class="t" style="right:955.35px;top:688.74px;font-size:13.3px;color:#000;transform:scale(1,1.16);transform-origin:right 11.26px;">0.434</div>
<div class="t" style="right:892.77px;top:688.74px;font-size:13.3px;color:#000;transform:scale(1,1.16);transform-origin:right 11.26px;">0.223</div>
<div class="t" style="right:830.2px;top:688.74px;font-size:13.3px;color:#000;transform:scale(1,1.16);transform-origin:right 11.26px;">0.472</div>
<div class="t" style="right:755.3px;top:688.74px;font-size:13.3px;color:#000;transform:scale(1,1.16);transform-origin:right 11.26px;">00.03.878</div>
<div class="a" style="left:10px;top:705.16px;width:123.9px;height:23.76px;overflow:hidden">
<div class="t" style="left:7px;top:7.3px;font-size:14.3px;color:#000;transform:scale(1.05,1.04);transform-origin:left 12.1px;">Matt Romanowski</div>
</div>
<div class="t" style="right:1330.8px;top:712.46px;font-size:14.3px;color:#000;transform:scale(1,1.04);transform-origin:right 12.1px;">run 1 lap 4</div>
<div class="t" style="right:1268.22px;top:712.5px;font-size:13.3px;color:#000;transform:scale(1,1.16);transform-origin:right 11.26px;">0.050</div>
<div class="t" style="right:1205.65px;top:712.5px;font-size:13.3px;color:#000;transform:scale(1,1.16);transform-origin:right 11.26px;">0.269</div>
<div class="t" style="right:1143.08px;top:712.5px;font-size:13.3px;color:#000;transform:scale(1,1.16);transform-origin:right 11.26px;">0.121</div>
<div class="t" style="right:1080.5px;top:712.5px;font-size:13.3px;color:#000;transform:scale(1,1.16);transform-origin:right 11.26px;">0.292</div>
<div class="t" style="right:1017.92px;top:712.5px;font-size:13.3px;color:#000;transform:scale(1,1.16);transform-origin:right 11.26px;">0.232</div>
<div class="t" style="right:955.35px;top:712.5px;font-size:13.3px;color:#0000ff;font-weight:bold;transform:scale(1.13,1.16);transform-origin:right 11.26px;">-0.006</div>
<div class="t" style="right:892.77px;top:712.5px;font-size:13.3px;color:#0000ff;font-weight:bold;transform:scale(1.13,1.16);transform-origin:right 11.26px;">-0.161</div>
<div class="t" style="right:830.2px;top:712.5px;font-size:13.3px;color:#000;transform:scale(1,1.16);transform-origin:right 11.26px;">-0.051</div>
<div class="t" style="right:755.3px;top:712.5px;font-size:13.3px;color:#000;transform:scale(1,1.16);transform-origin:right 11.26px;">00.00.746</div>
<div class="a" style="left:10px;top:728.92px;width:123.9px;height:23.76px;overflow:hidden">
<div class="t" style="left:7px;top:7.3px;font-size:14.3px;color:#000;transform:scale(1.05,1.04);transform-origin:left 12.1px;">Matt Romanowski</div>
</div>
<div class="t" style="right:1330.8px;top:736.22px;font-size:14.3px;color:#000;transform:scale(1,1.04);transform-origin:right 12.1px;">run 1 lap 5</div>
<div class="t" style="right:1268.22px;top:736.26px;font-size:13.3px;color:#000;transform:scale(1,1.16);transform-origin:right 11.26px;">0.022</div>
<div class="t" style="right:1205.65px;top:736.26px;font-size:13.3px;color:#000;transform:scale(1,1.16);transform-origin:right 11.26px;">0.139</div>
<div class="t" style="right:1143.08px;top:736.26px;font-size:13.3px;color:#000;transform:scale(1,1.16);transform-origin:right 11.26px;">0.088</div>
<div class="t" style="right:1080.5px;top:736.26px;font-size:13.3px;color:#000;transform:scale(1,1.16);transform-origin:right 11.26px;">0.116</div>
<div class="t" style="right:1017.92px;top:736.26px;font-size:13.3px;color:#000;transform:scale(1,1.16);transform-origin:right 11.26px;">0.460</div>
<div class="t" style="right:955.35px;top:736.26px;font-size:13.3px;color:#000;transform:scale(1,1.16);transform-origin:right 11.26px;">0.367</div>
<div class="t" style="right:892.77px;top:736.26px;font-size:13.3px;color:#000;transform:scale(1,1.16);transform-origin:right 11.26px;">-0.070</div>
<div class="t" style="right:830.2px;top:736.26px;font-size:13.3px;color:#000;transform:scale(1,1.16);transform-origin:right 11.26px;">0.019</div>
<div class="t" style="right:755.3px;top:736.26px;font-size:13.3px;color:#000;transform:scale(1,1.16);transform-origin:right 11.26px;">00.01.141</div>
<div class="a" style="left:10px;top:752.68px;width:123.9px;height:23.76px;overflow:hidden">
<div class="t" style="left:7px;top:7.3px;font-size:14.3px;color:#ff0000;font-weight:bold;transform:scale(1.05,1.04);transform-origin:left 12.1px;">Matt Romanowski</div>
</div>
<div class="t" style="right:1330.8px;top:759.98px;font-size:14.3px;color:#ff0000;font-weight:bold;transform:scale(1,1.04);transform-origin:right 12.1px;">run 1 lap 6</div>
<div class="t" style="right:1268.22px;top:760.02px;font-size:13.3px;color:#0000ff;font-weight:bold;transform:scale(1.13,1.16);transform-origin:right 11.26px;">0.000</div>
<div class="t" style="right:1205.65px;top:760.02px;font-size:13.3px;color:#0000ff;font-weight:bold;transform:scale(1.13,1.16);transform-origin:right 11.26px;">0.000</div>
<div class="t" style="right:1143.08px;top:760.02px;font-size:13.3px;color:#000;transform:scale(1,1.16);transform-origin:right 11.26px;">0.000</div>
<div class="t" style="right:1080.5px;top:760.02px;font-size:13.3px;color:#0000ff;font-weight:bold;transform:scale(1.13,1.16);transform-origin:right 11.26px;">0.000</div>
<div class="t" style="right:1017.92px;top:760.02px;font-size:13.3px;color:#0000ff;font-weight:bold;transform:scale(1.13,1.16);transform-origin:right 11.26px;">0.000</div>
<div class="t" style="right:955.35px;top:760.02px;font-size:13.3px;color:#000;transform:scale(1,1.16);transform-origin:right 11.26px;">0.000</div>
<div class="t" style="right:892.77px;top:760.02px;font-size:13.3px;color:#000;transform:scale(1,1.16);transform-origin:right 11.26px;">0.000</div>
<div class="t" style="right:830.2px;top:760.02px;font-size:13.3px;color:#000;transform:scale(1,1.16);transform-origin:right 11.26px;">0.000</div>
<div class="t" style="right:755.3px;top:760.02px;font-size:13.3px;color:#000;transform:scale(1,1.16);transform-origin:right 11.26px;">00.00.000</div>
<div class="a" style="left:10px;top:776.44px;width:123.9px;height:23.76px;overflow:hidden">
<div class="t" style="left:7px;top:7.3px;font-size:14.3px;color:#000;transform:scale(1.05,1.04);transform-origin:left 12.1px;">Matt Romanowski</div>
</div>
<div class="t" style="right:1330.8px;top:783.74px;font-size:14.3px;color:#000;transform:scale(1,1.04);transform-origin:right 12.1px;">run 1 lap 7</div>
<div class="t" style="right:1268.22px;top:783.78px;font-size:13.3px;color:#000;transform:scale(1,1.16);transform-origin:right 11.26px;">0.201</div>
<div class="t" style="right:1205.65px;top:783.78px;font-size:13.3px;color:#000;transform:scale(1,1.16);transform-origin:right 11.26px;">0.221</div>
<div class="t" style="right:1143.08px;top:783.78px;font-size:13.3px;color:#0000ff;font-weight:bold;transform:scale(1.13,1.16);transform-origin:right 11.26px;">-0.023</div>
<div class="t" style="right:1080.5px;top:783.78px;font-size:13.3px;color:#000;transform:scale(1,1.16);transform-origin:right 11.26px;">0.138</div>
<div class="t" style="right:1017.92px;top:783.78px;font-size:13.3px;color:#000;transform:scale(1,1.16);transform-origin:right 11.26px;">0.310</div>
<div class="t" style="right:955.35px;top:783.78px;font-size:13.3px;color:#000;transform:scale(1,1.16);transform-origin:right 11.26px;">0.061</div>
<div class="t" style="right:892.77px;top:783.78px;font-size:13.3px;color:#000;transform:scale(1,1.16);transform-origin:right 11.26px;">0.079</div>
<div class="t" style="right:830.2px;top:783.78px;font-size:13.3px;color:#000;transform:scale(1,1.16);transform-origin:right 11.26px;">-0.093</div>
<div class="t" style="right:755.3px;top:783.78px;font-size:13.3px;color:#000;transform:scale(1,1.16);transform-origin:right 11.26px;">00.00.894</div>
<div class="a" style="left:10px;top:800.2px;width:123.9px;height:23.76px;overflow:hidden">
<div class="t" style="left:7px;top:7.3px;font-size:14.3px;color:#000;transform:scale(1.05,1.04);transform-origin:left 12.1px;">Matt Romanowski</div>
</div>
<div class="t" style="right:1330.8px;top:807.5px;font-size:14.3px;color:#000;transform:scale(1,1.04);transform-origin:right 12.1px;">run 1 lap 8</div>
<div class="t" style="right:1268.22px;top:807.54px;font-size:13.3px;color:#000;transform:scale(1,1.16);transform-origin:right 11.26px;">0.027</div>
<div class="t" style="right:1205.65px;top:807.54px;font-size:13.3px;color:#000;transform:scale(1,1.16);transform-origin:right 11.26px;">0.384</div>
<div class="t" style="right:1143.08px;top:807.54px;font-size:13.3px;color:#000;transform:scale(1,1.16);transform-origin:right 11.26px;">-0.020</div>
<div class="t" style="right:1080.5px;top:807.54px;font-size:13.3px;color:#000;transform:scale(1,1.16);transform-origin:right 11.26px;">0.153</div>
<div class="t" style="right:1017.92px;top:807.54px;font-size:13.3px;color:#000;transform:scale(1,1.16);transform-origin:right 11.26px;">0.304</div>
<div class="t" style="right:955.35px;top:807.54px;font-size:13.3px;color:#000;transform:scale(1,1.16);transform-origin:right 11.26px;">0.167</div>
<div class="t" style="right:892.77px;top:807.54px;font-size:13.3px;color:#000;transform:scale(1,1.16);transform-origin:right 11.26px;">0.018</div>
<div class="t" style="right:830.2px;top:807.54px;font-size:13.3px;color:#000;transform:scale(1,1.16);transform-origin:right 11.26px;">0.052</div>
<div class="t" style="right:755.3px;top:807.54px;font-size:13.3px;color:#000;transform:scale(1,1.16);transform-origin:right 11.26px;">00.01.085</div>
<div class="a" style="left:10px;top:823.96px;width:123.9px;height:23.76px;overflow:hidden">
<div class="t" style="left:7px;top:7.3px;font-size:14.3px;color:#000;transform:scale(1.05,1.04);transform-origin:left 12.1px;">Matt Romanowski</div>
</div>
<div class="t" style="right:1330.8px;top:831.26px;font-size:14.3px;color:#000;transform:scale(1,1.04);transform-origin:right 12.1px;">run 1 lap 9</div>
<div class="t" style="right:1268.22px;top:831.3px;font-size:13.3px;color:#000;transform:scale(1,1.16);transform-origin:right 11.26px;">0.058</div>
<div class="t" style="right:1205.65px;top:831.3px;font-size:13.3px;color:#000;transform:scale(1,1.16);transform-origin:right 11.26px;">0.254</div>
<div class="t" style="right:1143.08px;top:831.3px;font-size:13.3px;color:#000;transform:scale(1,1.16);transform-origin:right 11.26px;">0.074</div>
<div class="t" style="right:1080.5px;top:831.3px;font-size:13.3px;color:#000;transform:scale(1,1.16);transform-origin:right 11.26px;">0.151</div>
<div class="t" style="right:1017.92px;top:831.3px;font-size:13.3px;color:#000;transform:scale(1,1.16);transform-origin:right 11.26px;">0.202</div>
<div class="t" style="right:955.35px;top:831.3px;font-size:13.3px;color:#000;transform:scale(1,1.16);transform-origin:right 11.26px;">0.088</div>
<div class="t" style="right:892.77px;top:831.3px;font-size:13.3px;color:#000;transform:scale(1,1.16);transform-origin:right 11.26px;">0.077</div>
<div class="t" style="right:830.2px;top:831.3px;font-size:13.3px;color:#0000ff;font-weight:bold;transform:scale(1.13,1.16);transform-origin:right 11.26px;">-0.170</div>
<div class="t" style="right:755.3px;top:831.3px;font-size:13.3px;color:#000;transform:scale(1,1.16);transform-origin:right 11.26px;">00.00.734</div>
<div class="a" style="left:10px;top:847.72px;width:123.9px;height:23.76px;overflow:hidden">
<div class="t" style="left:7px;top:7.3px;font-size:14.3px;color:#000;transform:scale(1.05,1.04);transform-origin:left 12.1px;">Matt Romanowski</div>
</div>
<div class="t" style="right:1330.8px;top:855.02px;font-size:14.3px;color:#000;transform:scale(1,1.04);transform-origin:right 12.1px;">run 1 lap 10</div>
<div class="t" style="right:1268.22px;top:855.06px;font-size:13.3px;color:#000;transform:scale(1,1.16);transform-origin:right 11.26px;">0.114</div>
<div class="t" style="right:1205.65px;top:855.06px;font-size:13.3px;color:#000;transform:scale(1,1.16);transform-origin:right 11.26px;">0.139</div>
<div class="t" style="right:1143.08px;top:855.06px;font-size:13.3px;color:#000;transform:scale(1,1.16);transform-origin:right 11.26px;">0.117</div>
<div class="t" style="right:1080.5px;top:855.06px;font-size:13.3px;color:#000;transform:scale(1,1.16);transform-origin:right 11.26px;">0.594</div>
<div class="t" style="right:1017.92px;top:855.06px;font-size:13.3px;color:#000;transform:scale(1,1.16);transform-origin:right 11.26px;">0.301</div>
<div class="t" style="right:955.35px;top:855.06px;font-size:13.3px;color:#000;transform:scale(1,1.16);transform-origin:right 11.26px;">0.185</div>
<div class="t" style="right:892.77px;top:855.06px;font-size:13.3px;color:#000;transform:scale(1,1.16);transform-origin:right 11.26px;">0.068</div>
<div class="t" style="right:830.2px;top:855.06px;font-size:13.3px;color:#000;transform:scale(1,1.16);transform-origin:right 11.26px;">0.086</div>
<div class="t" style="right:755.3px;top:855.06px;font-size:13.3px;color:#000;transform:scale(1,1.16);transform-origin:right 11.26px;">00.01.604</div>
<div class="a" style="left:10px;top:871.48px;width:123.9px;height:23.76px;overflow:hidden">
<div class="t" style="left:7px;top:7.3px;font-size:14.3px;color:#000;transform:scale(1.05,1.04);transform-origin:left 12.1px;">Matt Romanowski</div>
</div>
<div class="t" style="right:1330.8px;top:878.78px;font-size:14.3px;color:#000;transform:scale(1,1.04);transform-origin:right 12.1px;">run 1 lap 11</div>
<div class="t" style="right:1268.22px;top:878.82px;font-size:13.3px;color:#000;transform:scale(1,1.16);transform-origin:right 11.26px;">1.219</div>
<div class="t" style="right:1205.65px;top:878.82px;font-size:13.3px;color:#000;transform:scale(1,1.16);transform-origin:right 11.26px;">1.824</div>
<div class="t" style="right:1143.08px;top:878.82px;font-size:13.3px;color:#000;transform:scale(1,1.16);transform-origin:right 11.26px;">0.645</div>
<div class="t" style="right:1080.5px;top:878.82px;font-size:13.3px;color:#000;transform:scale(1,1.16);transform-origin:right 11.26px;">15.183</div>
<div class="t" style="right:1017.92px;top:878.82px;font-size:13.3px;color:#000;transform:scale(1,1.16);transform-origin:right 11.26px;">15.386</div>
<div class="t" style="right:955.35px;top:878.82px;font-size:13.3px;color:#000;transform:scale(1,1.16);transform-origin:right 11.26px;">9.508</div>
<div class="t" style="right:892.77px;top:878.82px;font-size:13.3px;color:#000;transform:scale(1,1.16);transform-origin:right 11.26px;">7.679</div>
<div class="t" style="right:830.2px;top:878.82px;font-size:13.3px;color:#000;transform:scale(1,1.16);transform-origin:right 11.26px;">94.411</div>
<div class="t" style="right:755.3px;top:878.82px;font-size:13.3px;color:#000;transform:scale(1,1.16);transform-origin:right 11.26px;">02.25.856</div>
<div class="gl" style="left:10px;top:87px;width:1533px;height:1px"></div>
<div class="gl" style="left:10px;top:111px;width:1533px;height:1px"></div>
<div class="gl" style="left:10px;top:135px;width:1533px;height:1px"></div>
<div class="gl" style="left:10px;top:158px;width:1533px;height:1px"></div>
<div class="gl" style="left:10px;top:182px;width:1533px;height:1px"></div>
<div class="gl" style="left:10px;top:206px;width:1533px;height:1px"></div>
<div class="gl" style="left:10px;top:230px;width:1533px;height:1px"></div>
<div class="gl" style="left:10px;top:253px;width:1533px;height:1px"></div>
<div class="gl" style="left:10px;top:277px;width:1533px;height:1px"></div>
<div class="gl" style="left:10px;top:301px;width:1533px;height:1px"></div>
<div class="gl" style="left:10px;top:325px;width:1533px;height:1px"></div>
<div class="gl" style="left:10px;top:348px;width:1533px;height:1px"></div>
<div class="gl" style="left:10px;top:372px;width:1533px;height:1px"></div>
<div class="gl" style="left:10px;top:396px;width:1533px;height:1px"></div>
<div class="gl" style="left:10px;top:420px;width:1533px;height:1px"></div>
<div class="gl" style="left:10px;top:443px;width:1533px;height:1px"></div>
<div class="gl" style="left:10px;top:467px;width:1533px;height:1px"></div>
<div class="gl" style="left:10px;top:491px;width:1533px;height:1px"></div>
<div class="gl" style="left:797px;top:515px;width:746px;height:1px"></div>
<div class="gl" style="left:10px;top:538px;width:1533px;height:1px"></div>
<div class="gl" style="left:797px;top:562px;width:746px;height:1px"></div>
<div class="gl" style="left:10px;top:586px;width:1533px;height:1px"></div>
<div class="gl" style="left:10px;top:610px;width:1533px;height:1px"></div>
<div class="gl" style="left:797px;top:633px;width:746px;height:1px"></div>
<div class="gl" style="left:10px;top:657px;width:1533px;height:1px"></div>
<div class="gl" style="left:10px;top:681px;width:1533px;height:1px"></div>
<div class="gl" style="left:10px;top:705px;width:1533px;height:1px"></div>
<div class="gl" style="left:10px;top:729px;width:1533px;height:1px"></div>
<div class="gl" style="left:10px;top:752px;width:1533px;height:1px"></div>
<div class="gl" style="left:10px;top:776px;width:1533px;height:1px"></div>
<div class="gl" style="left:10px;top:800px;width:1533px;height:1px"></div>
<div class="gl" style="left:10px;top:824px;width:1533px;height:1px"></div>
<div class="gl" style="left:10px;top:847px;width:1533px;height:1px"></div>
<div class="gl" style="left:10px;top:871px;width:1533px;height:1px"></div>
<div class="gl" style="left:10px;top:895px;width:1533px;height:1px"></div>
<div class="gl" style="left:134px;top:64px;width:1px;height:428px"></div>
<div class="gl" style="left:134px;top:516px;width:1px;height:23px"></div>
<div class="gl" style="left:134px;top:563px;width:1px;height:48px"></div>
<div class="gl" style="left:134px;top:634px;width:1px;height:277px"></div>
<div class="gl" style="left:222px;top:64px;width:1px;height:428px"></div>
<div class="gl" style="left:222px;top:516px;width:1px;height:23px"></div>
<div class="gl" style="left:222px;top:563px;width:1px;height:48px"></div>
<div class="gl" style="left:222px;top:634px;width:1px;height:277px"></div>
<div class="gl" style="left:284px;top:64px;width:1px;height:428px"></div>
<div class="gl" style="left:284px;top:516px;width:1px;height:23px"></div>
<div class="gl" style="left:284px;top:563px;width:1px;height:48px"></div>
<div class="gl" style="left:284px;top:634px;width:1px;height:277px"></div>
<div class="gl" style="left:347px;top:64px;width:1px;height:428px"></div>
<div class="gl" style="left:347px;top:516px;width:1px;height:23px"></div>
<div class="gl" style="left:347px;top:563px;width:1px;height:48px"></div>
<div class="gl" style="left:347px;top:634px;width:1px;height:277px"></div>
<div class="gl" style="left:409px;top:64px;width:1px;height:428px"></div>
<div class="gl" style="left:409px;top:516px;width:1px;height:23px"></div>
<div class="gl" style="left:409px;top:563px;width:1px;height:48px"></div>
<div class="gl" style="left:409px;top:634px;width:1px;height:277px"></div>
<div class="gl" style="left:472px;top:64px;width:1px;height:428px"></div>
<div class="gl" style="left:472px;top:516px;width:1px;height:23px"></div>
<div class="gl" style="left:472px;top:563px;width:1px;height:48px"></div>
<div class="gl" style="left:472px;top:634px;width:1px;height:277px"></div>
<div class="gl" style="left:534px;top:64px;width:1px;height:428px"></div>
<div class="gl" style="left:534px;top:516px;width:1px;height:23px"></div>
<div class="gl" style="left:534px;top:563px;width:1px;height:48px"></div>
<div class="gl" style="left:534px;top:634px;width:1px;height:277px"></div>
<div class="gl" style="left:597px;top:64px;width:1px;height:428px"></div>
<div class="gl" style="left:597px;top:516px;width:1px;height:23px"></div>
<div class="gl" style="left:597px;top:563px;width:1px;height:48px"></div>
<div class="gl" style="left:597px;top:634px;width:1px;height:277px"></div>
<div class="gl" style="left:660px;top:64px;width:1px;height:428px"></div>
<div class="gl" style="left:660px;top:516px;width:1px;height:23px"></div>
<div class="gl" style="left:660px;top:563px;width:1px;height:48px"></div>
<div class="gl" style="left:660px;top:634px;width:1px;height:277px"></div>
<div class="gl" style="left:722px;top:64px;width:1px;height:428px"></div>
<div class="gl" style="left:722px;top:516px;width:1px;height:23px"></div>
<div class="gl" style="left:722px;top:563px;width:1px;height:48px"></div>
<div class="gl" style="left:722px;top:634px;width:1px;height:277px"></div>
<div class="gl" style="left:797px;top:64px;width:1px;height:847px"></div>
<div class="a" style="left:983px;top:456px;width:516px;height:418px;background:#6ad6ee;border:1px solid #45a5bc;box-shadow:2px 2px 4px rgba(120,100,90,0.12)"></div>
<div class="t" style="left:1200px;top:469.36px;font-size:17.3px;color:#1b1b1b;transform:scale(1,1.05);transform-origin:left 14.64px;">Track map</div>
<div class="a" style="left:1464px;top:465px;width:24px;height:24px;background:#c75050"></div>
<div class="a" style="left:1464px;top:489px;width:24px;height:1px;background:#5fe0f8"></div>
<svg class="a" style="left:1464px;top:465px" width="24" height="24"><path d="M8 9.5 L16.5 16 M16.5 9.5 L8 16" stroke="#fff" stroke-width="2.5"/></svg>
<div class="a" style="left:992px;top:494px;width:498px;height:371px;background:#4fb3c9"></div>
<div class="a" style="left:993px;top:495px;width:497px;height:369px;background:#fff"></div>
<div class="a" style="left:993px;top:495px;width:496px;height:368px;background:#e3e3e3"></div>
<div class="a" style="left:993px;top:495px;width:495px;height:367px;background:#a0a0a0"></div>
<div class="a" style="left:994px;top:496px;width:494px;height:366px;background:#696969"></div>
<div class="a" style="left:995px;top:497px;width:493px;height:365px;background:#fff"></div>
<svg class="a" style="left:0;top:0" width="1552" height="918" viewBox="0 0 1552 918"><g fill="none" stroke-linejoin="round" stroke-linecap="round" stroke-width="2.9"><path d="M1287.0 569.8 L1293.0 571.5 L1300.7 576.3 L1306.0 583.0 L1309.5 592.0 L1311.0 604.0 L1311.3 612.0 L1311.5 621.0" stroke="#ff0000"/><path d="M1311.5 621.0 L1310.5 631.0 L1308.0 639.0 L1304.4 644.8 L1298.0 654.0 L1293.5 657.6 L1289.6 657.8 L1285.9 654.0 L1282.0 647.0 L1279.5 642.5 L1276.7 640.5 L1272.0 641.5 L1267.0 645.5 L1262.8 649.2" stroke="#0000ff"/><path d="M1262.8 649.2 L1257.0 652.5 L1252.6 656.5 L1247.5 662.5 L1244.5 668.0 L1241.5 676.3 L1240.2 684.0 L1239.6 692.0 L1240.0 700.0 L1241.2 709.3" stroke="#ff0000"/><path d="M1241.2 709.3 L1243.0 714.0 L1244.4 721.0 L1244.8 731.0 L1244.8 739.6 L1242.6 748.9 L1238.5 754.5 L1235.2 758.0 L1229.0 761.5 L1224.0 764.6 L1220.4 767.4 L1213.0 774.5 L1205.6 782.2 L1203.7 785.0" stroke="#00c000"/><path d="M1203.7 785.0 L1196.0 794.0 L1190.7 800.7 L1185.5 806.5 L1181.5 809.5 L1177.8 809.6 L1173.7 806.5 L1171.0 801.0 L1170.0 793.3 L1170.5 786.0 L1172.2 780.4 L1176.0 773.5 L1179.6 767.4 L1190.0 750.5 L1200.0 734.0 L1204.5 721.0 L1209.3 706.3 L1213.0 694.0 L1216.7 682.2 L1218.2 682.0" stroke="#0000ff"/><path d="M1218.2 682.0 L1221.0 672.0 L1224.8 659.6 L1228.5 648.5 L1232.0 643.0 L1236.0 640.0 L1241.5 638.3 L1245.2 639.3 L1251.0 639.3 L1256.3 639.3 L1260.5 636.0 L1263.7 631.9 L1266.5 628.5 L1268.3 625.7" stroke="#00c000"/><path d="M1268.3 625.7 L1270.2 618.9 L1271.5 612.0 L1272.0 605.9 L1270.5 601.5 L1267.0 598.8 L1263.7 597.6 L1258.0 597.6 L1252.6 597.6 L1247.0 594.8 L1243.0 591.0 L1239.6 587.4 L1235.0 584.0" stroke="#0000ff"/><path d="M1235.0 584.0 L1230.4 578.1 L1227.0 573.0 L1224.8 568.9 L1222.3 562.0 L1220.2 555.9 L1219.3 550.5 L1221.0 547.5 L1223.9 546.7 L1227.0 548.2 L1229.4 550.4 L1234.0 557.8 L1237.0 561.5 L1239.6 564.3 L1243.0 566.8 L1246.1 568.5 L1250.0 568.8 L1264.4 568.8" stroke="#00c000"/><path d="M1264.4 568.6 L1283.5 568.6" stroke="#ff0000"/></g><rect x="1308.2" y="619.7" width="6.5" height="2.6" fill="#000" transform="rotate(0 1311.5 621.0)"/><rect x="1259.5" y="647.9" width="6.5" height="2.6" fill="#000" transform="rotate(-8 1262.8 649.2)"/><rect x="1238.0" y="708.0" width="6.5" height="2.6" fill="#000" transform="rotate(5 1241.2 709.3)"/><rect x="1200.5" y="783.7" width="6.5" height="2.6" fill="#000" transform="rotate(35 1203.7 785.0)"/><rect x="1215.0" y="680.7" width="6.5" height="2.6" fill="#000" transform="rotate(10 1218.2 682.0)"/><rect x="1265.0" y="624.4" width="6.5" height="2.6" fill="#000" transform="rotate(15 1268.3 625.7)"/><rect x="1231.8" y="582.7" width="6.5" height="2.6" fill="#000" transform="rotate(10 1235.0 584.0)"/><path d="M1272.5 570.5 H1281" stroke="#000" stroke-width="1.5"/><path d="M1274 570 H1295" stroke="#00e0e0" stroke-width="2"/><path d="M1287.1 555.2 V584.7" stroke="#000" stroke-width="2.4"/><rect x="1286" y="569" width="2.2" height="2.2" fill="#f00"/><path d="M1291.2 570 H1302" stroke="#000" stroke-width="2"/><path d="M1263.4 559 V579.8 H1273" stroke="#000" stroke-width="2.4" fill="none"/><path d="M1271 576.3 L1275 576.5 L1279.5 579.8 L1275 583.5 L1271 583.7 Z" fill="#000"/></svg>
</body></html>
